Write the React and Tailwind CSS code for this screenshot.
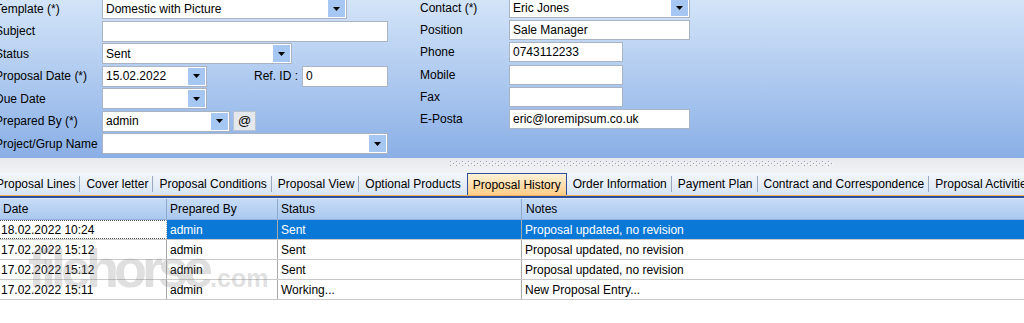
import React from "react";

const Arrow = () => (
  <svg width="7" height="4" viewBox="0 0 7 4">
    <path d="M0 0h7L3.5 4z" fill="#000" />
  </svg>
);

function Combo({ className, value }) {
  return (
    <div className={`flex h-full items-stretch border border-[#a9b3c1] bg-white ${className}`}>
      <div className="flex flex-1 items-center overflow-hidden whitespace-nowrap pl-[3px]">{value}</div>
      <div className="m-px flex w-[17px] items-center justify-center bg-[#a7c7f3]">
        <Arrow />
      </div>
    </div>
  );
}

function Box({ className, value }) {
  return (
    <div className={`flex h-full items-center border border-[#a9b3c1] bg-white pl-[3px] whitespace-nowrap ${className}`}>
      {value}
    </div>
  );
}

function LeftRow({ label, children }) {
  return (
    <div className="flex h-[21px] items-center">
      <div className="w-[107px] whitespace-nowrap">{label}</div>
      {children}
    </div>
  );
}

function RightRow({ label, children }) {
  return (
    <div className="flex h-[20px] items-center">
      <div className="w-[89px] whitespace-nowrap">{label}</div>
      {children}
    </div>
  );
}

const TABS = [
  "Proposal Lines",
  "Cover letter",
  "Proposal Conditions",
  "Proposal View",
  "Optional Products",
  "Proposal History",
  "Order Information",
  "Payment Plan",
  "Contract and Correspondence",
  "Proposal Activities",
];
const ACTIVE = "Proposal History";

const ROWS = [
  ["18.02.2022 10:24", "admin", "Sent", "Proposal updated, no revision"],
  ["17.02.2022 15:12", "admin", "Sent", "Proposal updated, no revision"],
  ["17.02.2022 15:12", "admin", "Sent", "Proposal updated, no revision"],
  ["17.02.2022 15:11", "admin", "Working...", "New Proposal Entry..."],
];

function Grip() {
  return (
    <svg width="383" height="5" className="block">
      <defs>
        <pattern id="g" width="6" height="4" patternUnits="userSpaceOnUse">
          <rect x="0" y="0" width="1" height="1" fill="#9aa4b0" />
          <rect x="1" y="1" width="1" height="1" fill="#ffffff" />
          <rect x="3" y="2" width="1" height="1" fill="#9aa4b0" />
          <rect x="4" y="3" width="1" height="1" fill="#ffffff" />
        </pattern>
      </defs>
      <rect width="383" height="5" fill="url(#g)" />
    </svg>
  );
}

export default function App() {
  return (
    <div className="h-[323px] w-[1024px] overflow-hidden bg-white font-['Liberation_Sans',Arial,sans-serif] text-[12px] text-black">
      {/* top form */}
      <div className="flex h-[158px] bg-linear-to-b from-[#d3e4f8] to-[#8aafe6]">
        <div className="-ml-[5px] mt-[-2px] flex w-[425px] flex-col gap-[1.5px]">
          <LeftRow label="Template (*)">
            <Combo className="w-[245px]" value="Domestic with Picture" />
          </LeftRow>
          <LeftRow label="Subject">
            <Box className="w-[286px]" value="" />
          </LeftRow>
          <LeftRow label="Status">
            <Combo className="w-[190px]" value="Sent" />
          </LeftRow>
          <LeftRow label="Proposal Date (*)">
            <Combo className="w-[105px]" value="15.02.2022" />
            <div className="ml-[47px] w-[48px] whitespace-nowrap">Ref. ID :</div>
            <Box className="w-[86px]" value="0" />
          </LeftRow>
          <LeftRow label="Due Date">
            <Combo className="w-[105px]" value="" />
          </LeftRow>
          <LeftRow label="Prepared By (*)">
            <Combo className="w-[128px]" value="admin" />
            <div className="ml-[3px] flex h-[20px] w-[23px] items-center justify-center border border-[#b9c3cf] bg-[#e4e7ec] text-[13px]">
              @
            </div>
          </LeftRow>
          <LeftRow label="Project/Grup Name">
            <Combo className="w-[286px]" value="" />
          </LeftRow>
        </div>
        <div className="mt-[-2px] flex flex-col gap-[2.2px]">
          <RightRow label="Contact (*)">
            <Combo className="w-[181px]" value="Eric Jones" />
          </RightRow>
          <RightRow label="Position">
            <Box className="w-[181px]" value="Sale Manager" />
          </RightRow>
          <RightRow label="Phone">
            <Box className="w-[114px]" value="0743112233" />
          </RightRow>
          <RightRow label="Mobile">
            <Box className="w-[114px]" value="" />
          </RightRow>
          <RightRow label="Fax">
            <Box className="w-[114px]" value="" />
          </RightRow>
          <RightRow label="E-Posta">
            <Box className="w-[181px]" value="eric@loremipsum.co.uk" />
          </RightRow>
        </div>
      </div>

      {/* splitter */}
      <div className="h-[15px] bg-linear-to-b from-[#e6e9ee] to-[#f2f3f5] pl-[450px] pt-[3px]">
        <Grip />
      </div>

      {/* tabs */}
      <div className="h-[22px] bg-linear-to-b from-[#f4f7fc] to-[#d8e4f4]">
        <div className="-ml-[10px] flex h-full items-stretch text-[12px]">
          {TABS.map((t, i) => {
            const active = t === ACTIVE;
            const nextActive = TABS[i + 1] === ACTIVE;
            if (active)
              return (
                <div
                  key={t}
                  className="ml-[2px] flex shrink-0 items-center whitespace-nowrap border border-b-0 border-[#2d4e9f] bg-linear-to-b from-[#fff2d6] to-[#ffcc86] px-[5px]"
                >
                  {t}
                </div>
              );
            return (
              <React.Fragment key={t}>
                <div className="flex shrink-0 items-center whitespace-nowrap pl-[6px] pr-[4px]">{t}</div>
                {!nextActive && <div className="h-[16px] w-px shrink-0 self-center bg-[#9aa8bd]" />}
              </React.Fragment>
            );
          })}
        </div>
      </div>
      <div className="h-px bg-[#f1b25a]" />
      <div className="h-[2px] bg-[#2d4e9f]" />
      <div className="h-px bg-[#dfe8f5]" />

      {/* grid */}
      <div className="relative">
        <div className="flex h-[21px] border-b border-[#8fb0dc] bg-linear-to-b from-[#c6dcf7] to-[#aac8ef]">
          <div className="flex w-[167px] items-center border-r border-[#8ea8cc] pl-[3px]">Date</div>
          <div className="flex w-[111px] items-center border-r border-[#8ea8cc] pl-[3px]">Prepared By</div>
          <div className="flex w-[244px] items-center border-r border-[#8ea8cc] pl-[3px]">Status</div>
          <div className="flex flex-1 items-center pl-[4px]">Notes</div>
        </div>
        {ROWS.map((r, i) => {
          const sel = i === 0;
          return (
            <div
              key={i}
              className={`flex h-[20px] border-b-[1.5px] border-[#c9c9c9] ${sel ? "bg-[#0a78d7] text-white" : "bg-white"}`}
            >
              <div
                className={`flex w-[167px] items-center border-r border-[#a9a9a9] pl-[1px] ${
                  sel ? "border-y border-dotted border-y-[#555] bg-white text-black" : ""
                }`}
              >
                {r[0]}
              </div>
              <div className="flex w-[111px] items-center border-r border-[#a9a9a9] pl-[3px]">{r[1]}</div>
              <div className="flex w-[244px] items-center border-r border-[#a9a9a9] pl-[3px]">{r[2]}</div>
              <div className="flex flex-1 items-center pl-[3px]">{r[3]}</div>
            </div>
          );
        })}
        {/* watermark */}
        <div className="pointer-events-none absolute left-[28px] top-[42px] flex items-end font-bold text-[rgba(120,120,120,0.24)]">
          <span className="text-[54px] leading-none tracking-[-5px]">filehorse</span>
          <span className="mb-[4px] ml-[2px] text-[25px] leading-none">.com</span>
        </div>
      </div>
    </div>
  );
}
